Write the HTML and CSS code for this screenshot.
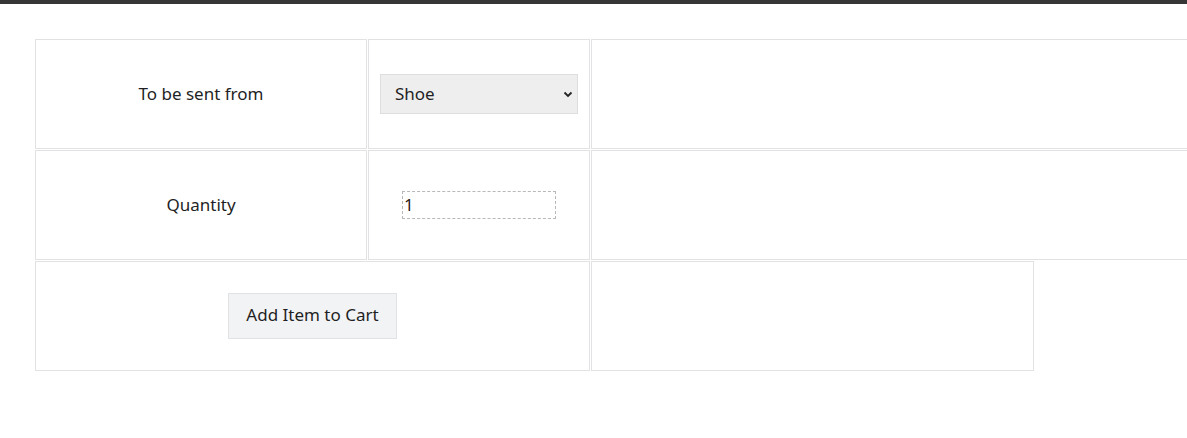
FILE: index.html
```html
<!DOCTYPE html>
<html lang="en">
<head>
<meta charset="utf-8">
<title>Cart</title>
<link rel="stylesheet" href="styles.css">
</head>
<body>
<div class="topbar"></div>
<form class="form">
  <div class="row">
    <div class="cell c1 label">To be sent from</div>
    <div class="cell c2">
      <div class="select-wrap">
        <select class="select">
          <option>Shoe</option>
        </select>
        <svg class="chev" width="10" height="7" viewBox="0 0 10 7"><path d="M1.5 1.5 L5 5 L8.5 1.5" fill="none" stroke="#222" stroke-width="1.8"/></svg>
      </div>
    </div>
    <div class="cell c3"></div>
  </div>
  <div class="row">
    <div class="cell c1 label">Quantity</div>
    <div class="cell c2"><input class="qty" type="text" value="1"></div>
    <div class="cell c3"></div>
  </div>
  <div class="row">
    <div class="cell c12"><button type="button" class="btn">Add Item to Cart</button></div>
    <div class="cell c3s"></div>
  </div>
</form>
</body>
</html>
```
FILE: styles.css
```css
html, body {
  margin: 0;
  padding: 0;
  background: #fff;
  overflow: hidden;
}
body {
  font-family: "Noto Sans", "Open Sans", sans-serif;
  font-size: 16px;
  color: #1f1f24;
}
.topbar {
  height: 4px;
  background: #363636;
}
.form {
  display: flex;
  flex-direction: column;
  gap: 1px;
  margin: 35px 0 0 35px;
  width: 1400px;
}
.row {
  display: flex;
  gap: 1px;
}
.cell {
  box-sizing: border-box;
  height: 110px;
  border: 1px solid #e2e2e4;
  display: flex;
  align-items: center;
  justify-content: center;
  flex: none;
}
.label {
  font-size: 17px;
  padding-bottom: 2px;
}
.c1 { width: 332px; }
.c2 { width: 222px; }
.c3 { width: 800px; }
.c12 { width: 555px; }
.c3s { width: 443px; }
.select-wrap {
  position: relative;
  width: 198px;
  height: 40px;
}
.select {
  appearance: none;
  -webkit-appearance: none;
  box-sizing: border-box;
  width: 198px;
  height: 40px;
  background: #eeeeee;
  border: 1px solid #dedede;
  border-radius: 0;
  padding: 0 0 2px 14px;
  font-family: inherit;
  font-size: 17px;
  color: #1f1f24;
  margin: 0;
}
.chev {
  position: absolute;
  right: 5px;
  top: 17px;
  pointer-events: none;
}
.qty {
  box-sizing: border-box;
  width: 154px;
  height: 28px;
  border: 1px dashed #b8b8b8;
  padding: 0 0 1px 1px;
  font-family: inherit;
  font-size: 17px;
  color: #2a1a14;
  background: #fff;
  outline: none;
  margin: 0;
}
.btn {
  box-sizing: border-box;
  width: 169px;
  height: 46px;
  background: #f2f3f5;
  border: 1px solid #e1e2e4;
  border-radius: 0;
  font-family: inherit;
  font-size: 17px;
  color: #1f1f24;
  padding: 0 0 3px;
  margin: 0;
}
```
